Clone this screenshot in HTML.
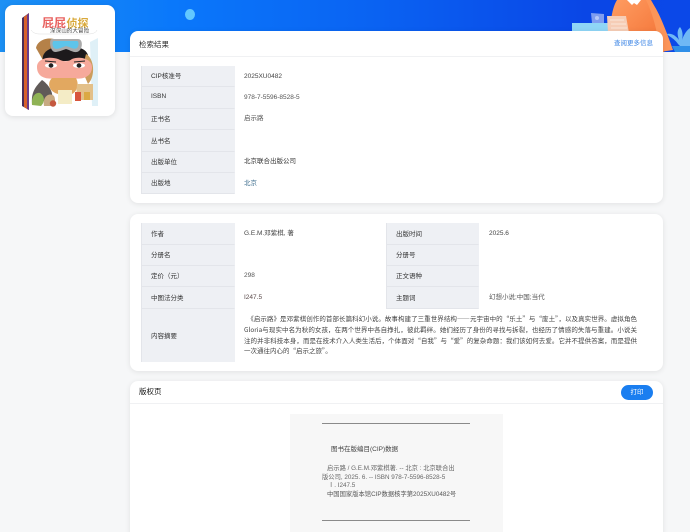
<!DOCTYPE html>
<html lang="zh"><head><meta charset="utf-8"><title>检索结果</title>
<style>
*{box-sizing:border-box;margin:0;padding:0}
html,body{width:690px;height:532px;overflow:hidden;background:#f6f7f8}
body{position:relative;font-family:"Liberation Sans","Noto Sans CJK SC",sans-serif;font-size:6.5px;color:#333}
.hdr{position:absolute;left:0;top:0;width:690px;height:52px;background:linear-gradient(90deg,#1c90f4 0%,#0a78fb 25%,#0a62f2 55%,#0a46e6 85%,#0b48e8 100%)}
.card{position:absolute;left:130px;width:533px;background:#fff;border-radius:8px;box-shadow:0 1px 6px rgba(0,0,0,.09)}
.t{position:absolute;white-space:nowrap;line-height:10px}
.lb{position:absolute;background:#eef0f4;border-bottom:1px solid #e3e5ea;border-left:1px solid #e3e5ea;border-right:1px solid #eef0f4;color:#333;padding:0 0 2px 9px;display:flex;align-items:center;font-size:6.5px}
.v{position:absolute;white-space:nowrap;color:#555;font-size:6.5px;line-height:10px}
.hl{position:absolute;left:0;right:0;height:1px;background:#f0f1f3}
.sm{position:absolute;left:244px;width:393px;height:11px;font-size:6.5px;line-height:11px;color:#444;font-family:"Noto Sans CJK SC",sans-serif;white-space:nowrap}
.j{text-align:justify;text-align-last:justify}
</style></head><body>
<div class="hdr"></div>
<div style="position:absolute;left:185px;top:9px;width:10px;height:11px;border-radius:50%;background:#62c8ff"></div>
<svg style="position:absolute;left:560px;top:0" width="130" height="60" viewBox="560 0 130 60">
<defs><linearGradient id="o" x1="0" x2="1" y1="0" y2="1"><stop offset="0" stop-color="#ff9d62"/><stop offset="1" stop-color="#f26f32"/></linearGradient></defs>
<path d="M610 40C610 22 612 8 617 0H651C656 8 661 24 664 52H612Z" fill="url(#o)"/>
<path d="M650 0C656 6 664 24 673 50L660 52C658 34 653 14 646 0Z" fill="#fc9559"/>
<path d="M627 0L632 5L634 3L637 5L641 0Z" fill="#fff"/>
<rect x="572" y="23" width="38" height="10" fill="#8fd6f6"/>
<path d="M591 13L604 14V23H592Z" fill="#7f9df0"/>
<circle cx="597" cy="18" r="2" fill="#b5c8f8"/>
<path d="M607 16H626L629 33H608Z" fill="#f6cdb6"/>
<path d="M610 20H624M611 24H626M611 28H627" stroke="#fdeee6" stroke-width=".8"/>
<path d="M678 44C674 38 668 36 667 34C672 33 676 36 679 40C677 34 677 30 680 27C683 31 683 36 682 40C684 34 687 30 690 28V46H680Z" fill="#6fb8f5"/>
<path d="M672 46H690V52H675Z" fill="#2f8fe8"/>
</svg>

<div style="position:absolute;left:5px;top:5px;width:110px;height:111px;background:#fff;border-radius:8px;box-shadow:0 1px 6px rgba(0,0,0,.1)"></div>
<svg style="position:absolute;left:20px;top:10px" width="82" height="102" viewBox="20 10 82 102">
<path d="M22 18L29 13V110L22 106Z" fill="#4a2b58"/>
<path d="M24 17L29 13V110L24 107Z" fill="#d8602a"/>
<path d="M27 15L29 13V110L27 109Z" fill="#6a3a8a"/>
<path d="M29 13L98 16V108L29 110Z" fill="#fff"/>
<path d="M90 42L98 38V106L92 106Z" fill="#dff0f7"/>
<path d="M31 30C33 33 36 34 40 34H88C92 34 96 33 97 30" fill="none" stroke="#ddd" stroke-width=".5"/>
<text x="42" y="27" font-size="12" font-weight="700" fill="#e8605e" font-family="'Noto Sans CJK SC',sans-serif">屁屁</text>
<text x="66.500" y="27" font-size="11" font-weight="700" fill="#d9a93a" font-family="'Noto Sans CJK SC',sans-serif">侦探</text>
<text x="50" y="32.5" font-size="5.6" fill="#444" font-family="'Noto Sans CJK SC',sans-serif">深深山的大冒险</text>
<path d="M36 48C37 41 46 37 54 39L50 52L44 62Z" fill="#b58148"/>
<path d="M43 62C40 50 54 46 66 46C80 46 90 50 88 60Z" fill="#1d1a1c"/>
<path d="M86 54C94 58 96 76 88 84L82 70Z" fill="#cc9d5c"/>
<path d="M52 39H78C83 39 83 48 79 51C75 54 70 50 66 49C60 51 54 54 52 50C50 47 49 39 52 39Z" fill="#aaa"/>
<path d="M54 41H77C79 41 79 46 77 48C74 50 70 47 66 46C61 48 56 50 54 48C52 46 52 41 54 41Z" fill="#5ec4ea"/>
<path d="M37 67C37 58 50 56 58 59C64 62 68 62 72 59C78 56 92 58 92 67C92 78 80 80 72 78H56C46 80 37 77 37 67Z" fill="#f6a99b"/>
<ellipse cx="51" cy="65.500" rx="6" ry="2.400" fill="#fff"/><ellipse cx="51" cy="65.500" rx="2.400" ry="2.200" fill="#222"/>
<ellipse cx="79" cy="65.500" rx="6" ry="2.400" fill="#fff"/><ellipse cx="79" cy="65.500" rx="2.400" ry="2.200" fill="#222"/>
<path d="M45 61L56 62M85 61L74 62" stroke="#222" stroke-width="1.1"/>
<path d="M52 78H76C80 86 76 92 72 94V103H58V94C50 92 46 84 52 78Z" fill="#e2a860"/>
<path d="M58 90H72V104H58Z" fill="#f4ecc6"/>
<path d="M32 103C31 92 36 86 42 80C48 84 54 92 52 100Z" fill="#605a58"/>
<path d="M32 105C31 96 36 92 40 93C45 96 45 102 41 106Z" fill="#8fb355"/>
<path d="M44 106C42 96 50 92 54 96C56 100 55 105 52 106Z" fill="#c7aa82"/>
<circle cx="53" cy="103.500" r="3.200" fill="#c5583f"/>
<path d="M77 84H93V100H76Z" fill="#e3c089"/>
<rect x="75" y="92" width="6" height="9" fill="#d8553c"/>
<rect x="84" y="92" width="6" height="8" fill="#dba944"/>
</svg>

<!-- card 1 -->
<div class="card" style="top:31px;height:172px">
 <div class="t" style="left:9px;top:9px;font-size:7.5px;color:#333">检索结果</div>
 <div class="t" style="left:484px;top:8px;color:#3d86e6;font-size:6.5px">查阅更多信息</div>
 <div class="hl" style="top:25px"></div>
</div>
<div class="lb" style="left:141px;top:66px;width:94px;height:21px">CIP核准号</div>
<div class="lb" style="left:141px;top:87px;width:94px;height:22px">ISBN</div>
<div class="lb" style="left:141px;top:109px;width:94px;height:21px">正书名</div>
<div class="lb" style="left:141px;top:130px;width:94px;height:22px">丛书名</div>
<div class="lb" style="left:141px;top:152px;width:94px;height:21px">出版单位</div>
<div class="lb" style="left:141px;top:173px;width:94px;height:21px">出版地</div>
<div class="v" style="left:244px;top:72px;color:#444">2025XU0482</div>
<div class="v" style="left:244px;top:93px">978-7-5596-8528-5</div>
<div class="v" style="left:244px;top:114px">启示路</div>
<div class="v" style="left:244px;top:157px;color:#333">北京联合出版公司</div>
<div class="v" style="left:244px;top:179px;color:#3f6f8f">北京</div>

<!-- card 2 -->
<div class="card" style="top:214px;height:157px"></div>
<div class="lb" style="left:141px;top:223px;width:94px;height:22px">作者</div>
<div class="lb" style="left:141px;top:245px;width:94px;height:21px">分册名</div>
<div class="lb" style="left:141px;top:266px;width:94px;height:21px">定价（元）</div>
<div class="lb" style="left:141px;top:287px;width:94px;height:22px">中图法分类</div>
<div class="lb" style="left:141px;top:309px;width:94px;height:53px;border-bottom:none">内容摘要</div>
<div class="lb" style="left:386px;top:223px;width:93px;height:22px">出版时间</div>
<div class="lb" style="left:386px;top:245px;width:93px;height:21px">分册号</div>
<div class="lb" style="left:386px;top:266px;width:93px;height:21px">正文语种</div>
<div class="lb" style="left:386px;top:287px;width:93px;height:22px">主题词</div>
<div class="v" style="left:244px;top:229px;color:#444">G.E.M.邓紫棋, 著</div>
<div class="v" style="left:244px;top:271px">298</div>
<div class="v" style="left:244px;top:293px;color:#5a4a4a">I247.5</div>
<div class="v" style="left:489px;top:229px;color:#444">2025.6</div>
<div class="v" style="left:489px;top:293px;color:#555">幻想小说;中国;当代</div>
<div class="sm j" style="top:313px">　《启示路》是邓紫棋创作的首部长篇科幻小说。故事构建了三重世界结构——元宇宙中的“乐土”与“废土”，以及真实世界。虚拟角色</div>
<div class="sm j" style="top:324px">Gloria与现实中名为秋的女孩，在两个世界中各自挣扎，彼此羁绊。她们经历了身份的寻找与拆裂，也经历了情感的失落与重建。小说关</div>
<div class="sm j" style="top:335px">注的并非科技本身，而是在技术介入人类生活后，个体面对“自我”与“爱”的复杂命题：我们该如何去爱。它并不提供答案，而是提供</div>
<div class="sm" style="top:345px">一次通往内心的“启示之旅”。</div>

<!-- card 3 -->
<div class="card" style="top:381px;height:170px">
 <div class="t" style="left:9px;top:6px;font-size:7.5px;color:#111">版权页</div>
 <div class="hl" style="top:22px"></div>
 <div style="position:absolute;left:491px;top:4px;width:32px;height:15px;border-radius:8px;background:#1a7ef0;color:#fff;font-size:6.5px;line-height:15px;text-align:center">打印</div>
</div>
<div style="position:absolute;left:290px;top:414px;width:213px;height:118px;background:#f7f7f7"></div>
<div style="position:absolute;left:322px;top:423px;width:148px;height:1px;background:#8a8a8a"></div>
<div style="position:absolute;left:322px;top:520px;width:148px;height:1px;background:#8a8a8a"></div>
<div class="t" style="left:331px;top:445px;color:#444;font-size:6.5px">图书在版编目(CIP)数据</div>
<div class="t" style="left:327px;top:464px;color:#666;font-size:6.3px">启示路 / G.E.M.邓紫棋著. -- 北京 : 北京联合出</div>
<div class="t" style="left:322px;top:473px;color:#666;font-size:6.3px">版公司, 2025. 6. -- ISBN 978-7-5596-8528-5</div>
<div class="t" style="left:328px;top:481px;color:#666;font-size:6.3px">Ⅰ. I247.5</div>
<div class="t" style="left:327px;top:490px;color:#555;font-size:6.3px">中国国家版本馆CIP数据核字第2025XU0482号</div>
</body></html>
